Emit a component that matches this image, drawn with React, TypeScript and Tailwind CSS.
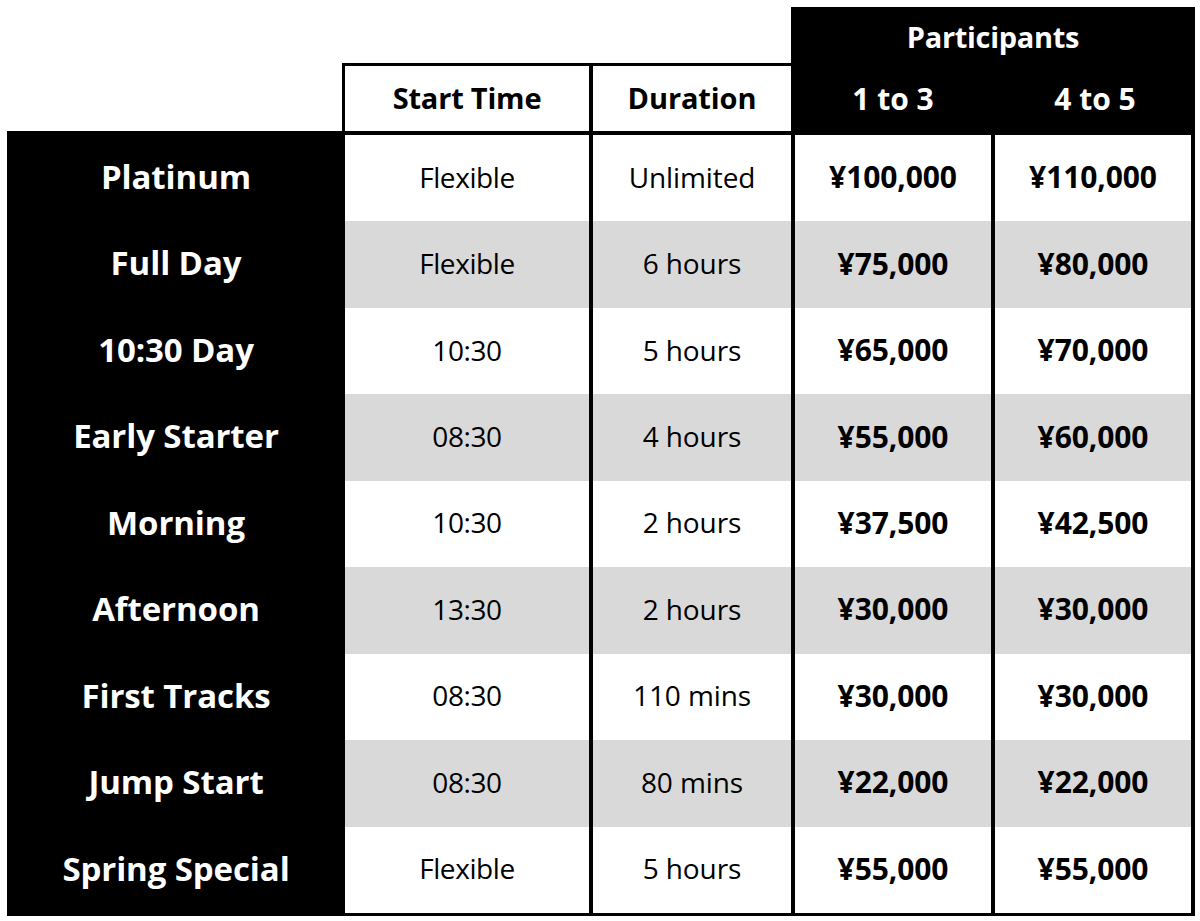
import React from "react";

const rows = [
  ["Platinum", "Flexible", "Unlimited", "¥100,000", "¥110,000"],
  ["Full Day", "Flexible", "6 hours", "¥75,000", "¥80,000"],
  ["10:30 Day", "10:30", "5 hours", "¥65,000", "¥70,000"],
  ["Early Starter", "08:30", "4 hours", "¥55,000", "¥60,000"],
  ["Morning", "10:30", "2 hours", "¥37,500", "¥42,500"],
  ["Afternoon", "13:30", "2 hours", "¥30,000", "¥30,000"],
  ["First Tracks", "08:30", "110 mins", "¥30,000", "¥30,000"],
  ["Jump Start", "08:30", "80 mins", "¥22,000", "¥22,000"],
  ["Spring Special", "Flexible", "5 hours", "¥55,000", "¥55,000"],
];

export default function App() {
  return (
    <div
      className="w-[1200px] h-[921px] bg-white text-black overflow-hidden"
      style={{ fontFamily: '"Open Sans", "Noto Sans", sans-serif' }}
    >
      <div className="pt-[7px] pl-[7px]">
        {/* Header */}
        <div className="flex items-end h-[128px]">
          <div className="w-[335px] h-[4px] bg-black" />
          <div className="flex h-[72px] w-[449px] border-l-[3px] border-t-[3px] border-b-[4px] border-black">
            <div className="w-[248px] border-r-[4px] border-black flex items-center justify-center pb-[2px] text-[29px] font-bold tracking-[-0.2px]">
              Start Time
            </div>
            <div className="flex-1 flex items-center justify-center pb-[2px] text-[29px] font-bold tracking-[-0.1px]">
              Duration
            </div>
          </div>
          <div className="w-[404px] h-[128px] bg-black text-white flex flex-col">
            <div className="h-[60px] flex items-center justify-center text-[29px] font-bold tracking-[-0.3px]">
              Participants
            </div>
            <div className="flex-1 flex pb-[6px]">
              <div className="w-[204px] flex items-center justify-center text-[30px] font-bold">
                1 to 3
              </div>
              <div className="flex-1 flex items-center justify-center text-[30px] font-bold">
                4 to 5
              </div>
            </div>
          </div>
        </div>
        {/* Body */}
        <div className="w-[1188px] border-b-[3px] border-black grid grid-rows-[repeat(9,1fr)] h-[781px]">
          {rows.map((r, i) => {
            const bg = i % 2 === 1 ? "bg-[#d9d9d9]" : "bg-white";
            return (
              <div key={i} className="flex">
                <div className="w-[338px] bg-black text-white flex items-center justify-center pb-[3px] text-[33px] font-bold tracking-[-0.1px]">
                  {r[0]}
                </div>
                <div className={`w-[248px] border-r-[4px] border-black ${bg} flex items-center justify-center pb-[3px] text-[28px] tracking-[-0.4px]`}>
                  {r[1]}
                </div>
                <div className={`w-[202px] border-r-[4px] border-black ${bg} flex items-center justify-center pb-[3px] text-[28px] tracking-[-0.1px]`}>
                  {r[2]}
                </div>
                <div className={`w-[200px] border-r-[4px] border-black ${bg} flex items-center justify-center pb-[3px] text-[30px] font-bold tracking-[-0.1px]`}>
                  {r[3]}
                </div>
                <div className={`w-[200px] border-r-[4px] border-black ${bg} flex items-center justify-center pb-[3px] text-[30px] font-bold tracking-[-0.1px]`}>
                  {r[4]}
                </div>
              </div>
            );
          })}
        </div>
      </div>
    </div>
  );
}
